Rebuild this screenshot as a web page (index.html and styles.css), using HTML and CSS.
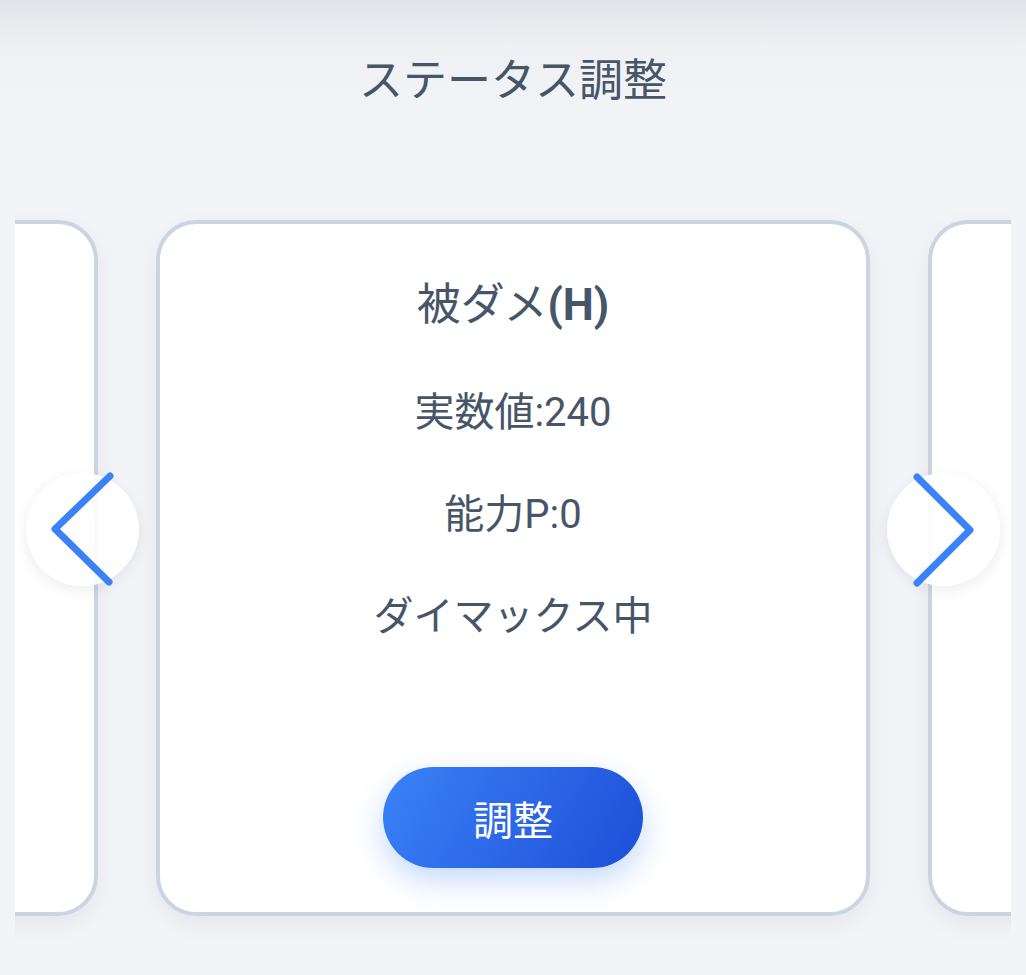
FILE: index.html
```html
<!DOCTYPE html>
<html lang="ja">
<head>
    <meta charset="UTF-8">
    <meta name="viewport" content="width=device-width, initial-scale=1.0">
    <title>ステータス調整</title>
    <link rel="stylesheet" href="styles.css">
</head>
<body>

    <div class="page">
        <h1 class="page-title">ステータス調整</h1>

        <div class="carousel">
            <div class="track">
                <div class="card card-side"></div>
                <div class="card">
                    <h2 class="card-title">被ダメ<b>(H)</b></h2>
                    <p class="card-line">実数値:240</p>
                    <p class="card-line">能力P:0</p>
                    <p class="card-line">ダイマックス中</p>
                    <button class="adjust-button">調整</button>
                </div>
                <div class="card card-side"></div>
            </div>

            <button class="nav-button nav-prev" aria-label="前へ">
                <svg width="113" height="113" viewBox="0 0 113 113">
                    <path d="M84 3 L29 56 L83 109" fill="none" stroke="#3b82f6" stroke-width="7" stroke-linecap="round" stroke-linejoin="round"/>
                </svg>
            </button>
            <button class="nav-button nav-next" aria-label="次へ">
                <svg width="113" height="113" viewBox="0 0 113 113">
                    <path d="M30 4 L83 57 L30 110" fill="none" stroke="#3b82f6" stroke-width="7" stroke-linecap="round" stroke-linejoin="round"/>
                </svg>
            </button>
        </div>
    </div>

</body>
</html>
```

FILE: styles.css
```css
* {
    box-sizing: border-box;
    margin: 0;
    padding: 0;
}
body {
    font-family: Roboto, "Noto Sans CJK JP", sans-serif;
    background: linear-gradient(to bottom, #e2e4e9 0px, #eef0f4 45px, #f3f4f8 120px);
    background-color: #f3f4f8;
    color: #475569;
    min-height: 100vh;
}
.page {
    padding: 48px 15px 0;
}
.page-title {
    text-align: center;
    font-size: 44px;
    font-weight: 400;
    line-height: 66px;
    color: #475569;
    margin-bottom: 66px;
}
.carousel {
    position: relative;
    overflow: hidden;
    padding: 40px 0 50px;
}
.track {
    display: flex;
    justify-content: center;
    gap: 58px;
}
.card {
    flex: 0 0 714px;
    min-height: 696px;
    background-color: #ffffff;
    border: 4px solid #cbd5e1;
    border-radius: 40px;
    box-shadow: 0 8px 24px rgba(15, 23, 42, 0.06);
    display: flex;
    flex-direction: column;
    align-items: center;
    padding: 48px 20px 44px;
}
.card-title {
    font-size: 44px;
    font-weight: 400;
    line-height: 66px;
    color: #475569;
}
.card-title b {
    font-weight: 700;
}
.card-line {
    font-size: 40px;
    line-height: 60px;
    margin-top: 42px;
}
.card-line:first-of-type {
    margin-top: 45px;
}
.adjust-button {
    margin-top: auto;
    width: 260px;
    height: 101px;
    border: none;
    border-radius: 51px;
    background: linear-gradient(120deg, #3b82f6, #1d4ed8);
    box-shadow: 0 12px 30px rgba(59, 130, 246, 0.3);
    color: #ffffff;
    font-family: Roboto, "Noto Sans CJK JP", sans-serif;
    font-size: 40px;
    cursor: pointer;
}
.nav-button {
    position: absolute;
    top: 293px;
    width: 113px;
    height: 113px;
    border: none;
    border-radius: 50%;
    background-color: rgba(255, 255, 255, 0.9);
    box-shadow: 0 4px 14px rgba(15, 23, 42, 0.08);
    cursor: pointer;
    display: flex;
    align-items: center;
    justify-content: center;
}
.nav-button svg {
    display: block;
    overflow: visible;
}
.nav-prev {
    left: 11px;
}
.nav-next {
    right: 11px;
}
```
